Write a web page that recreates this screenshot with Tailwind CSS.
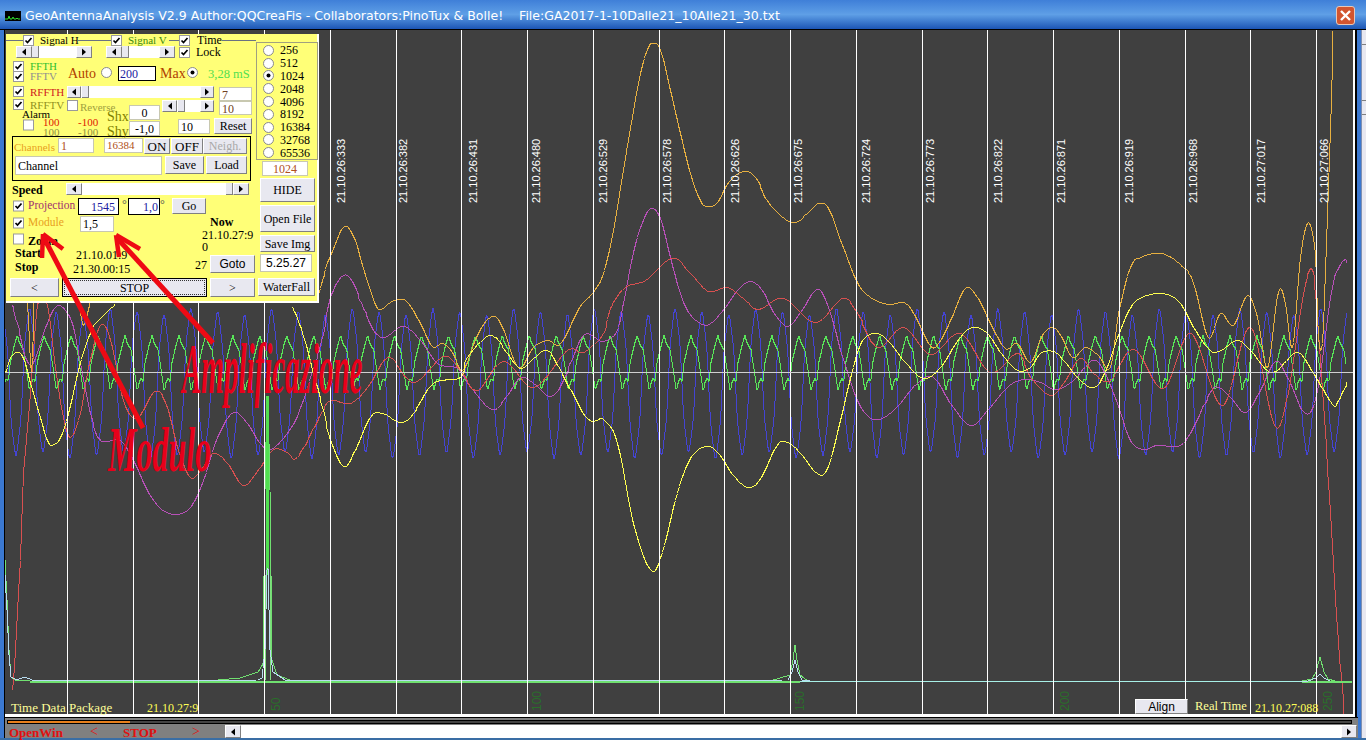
<!DOCTYPE html>
<html lang="en">
<head>
    <meta charset="UTF-8">
    <title>GeoAntennaAnalysis V2.9</title>
    <script src="https://cdn.jsdelivr.net/npm/@tailwindcss/browser@4"></script>
</head>
<body class="w-[1366px] h-[740px] overflow-hidden relative flex flex-col bg-[#3a6ea5] font-['Liberation_Serif',serif] text-[12px] leading-none text-black">

    <svg class="hidden">
        <symbol id="chk" viewBox="0 0 11 11"><rect x="0.5" y="0.5" width="10" height="10" fill="#fff" stroke="#9a9a9a"/><path d="M2.5 5.5l2 2 4-4.5" fill="none" stroke="#000" stroke-width="1.7"/></symbol>
        <symbol id="box" viewBox="0 0 11 11"><rect x="0.5" y="0.5" width="10" height="10" fill="#fff" stroke="#9a9a9a"/></symbol>
        <symbol id="rad" viewBox="0 0 11 11"><circle cx="5.5" cy="5.5" r="5" fill="#fff" stroke="#8a8a8a"/></symbol>
        <symbol id="rdo" viewBox="0 0 11 11"><circle cx="5.5" cy="5.5" r="5" fill="#fff" stroke="#8a8a8a"/><circle cx="5.5" cy="5.5" r="2" fill="#000"/></symbol>
        <symbol id="lft" viewBox="0 0 8 8"><path d="M6 0.5v7L2 4z" fill="#000"/></symbol>
        <symbol id="rgt" viewBox="0 0 8 8"><path d="M2 0.5v7L6 4z" fill="#000"/></symbol>
    </svg>

    <!-- title bar -->
    <div class="h-[30px] shrink-0 flex items-center bg-gradient-to-b from-[#3f7fd8] via-[#5f9fe6] to-[#1c55b4] border-b border-black pl-[5px] pr-[11px]">
        <svg class="w-[16px] h-[10px] mt-[3px]" viewBox="0 0 16 10"><rect width="16" height="10" fill="#000"/><path d="M0 8h3l1-3 1 3h2l1-2 1 2h2l1-1 1 1h2" fill="none" stroke="#30e030"/></svg>
        <span class="ml-[4px] mt-[3px] font-['DejaVu_Sans',sans-serif] text-[12.53px] text-white whitespace-pre">GeoAntennaAnalysis V2.9 Author:QQCreaFis - Collaborators:PinoTux &amp; Bolle!    File:GA2017-1-10Dalle21_10Alle21_30.txt</span>
        <div class="ml-auto mt-[1px] w-[19px] h-[19px] rounded-[3px] border border-[#e8c8b8] bg-[#d2552f] flex items-center justify-center">
            <svg class="w-[11px] h-[11px]" viewBox="0 0 11 11"><path d="M1 1l9 9M10 1l-9 9" stroke="#fff" stroke-width="2.4"/></svg>
        </div>
    </div>

    <div class="h-[708px] shrink-0 flex">
        <div class="w-[5px] shrink-0 bg-[#3b78d0] border-r border-black"></div>

        <!-- plot area -->
        <div class="w-[1350px] shrink-0 flex flex-col">
            <div class="h-[687px] relative bg-[#404040] border-b-[3px] border-r-2 border-white">
                <svg id="plot" class="w-[1348px] h-[684px]" viewBox="5 30 1348 684" shape-rendering="crispEdges" font-family="Liberation Sans">
                    <g id="curves" fill="none" stroke-width="1"></g>
                    <g fill="#ffffff" font-size="11">
                        <text transform="translate(345 203) rotate(-90)">21.10.26:333</text>
                        <text transform="translate(407 203) rotate(-90)">21.10.26:382</text>
                        <text transform="translate(477 203) rotate(-90)">21.10.26:431</text>
                        <text transform="translate(540 203) rotate(-90)">21.10.26:480</text>
                        <text transform="translate(607 203) rotate(-90)">21.10.26:529</text>
                        <text transform="translate(671 203) rotate(-90)">21.10.26:578</text>
                        <text transform="translate(739 203) rotate(-90)">21.10.26:626</text>
                        <text transform="translate(802 203) rotate(-90)">21.10.26:675</text>
                        <text transform="translate(870 203) rotate(-90)">21.10.26:724</text>
                        <text transform="translate(934 203) rotate(-90)">21.10.26:773</text>
                        <text transform="translate(1002 203) rotate(-90)">21.10.26:822</text>
                        <text transform="translate(1065 203) rotate(-90)">21.10.26:871</text>
                        <text transform="translate(1133 203) rotate(-90)">21.10.26:919</text>
                        <text transform="translate(1197 203) rotate(-90)">21.10.26:968</text>
                        <text transform="translate(1265 203) rotate(-90)">21.10.27:017</text>
                        <text transform="translate(1328 203) rotate(-90)">21.10.27:066</text>
                    </g>
                    <g fill="#2a6e2a" font-size="12">
                        <text transform="translate(280 711) rotate(-90)">50</text>
                        <text transform="translate(541 711) rotate(-90)">100</text>
                        <text transform="translate(804 711) rotate(-90)">150</text>
                        <text transform="translate(1069 711) rotate(-90)">200</text>
                        <text transform="translate(1332 711) rotate(-90)">250</text>
                    </g>
                </svg>

                <div class="absolute left-[6px] top-[671px] text-[13px] text-[#ffff99] whitespace-nowrap">Time Data Package</div>
                <div class="absolute left-[142px] top-[672px] text-[#ffff55] whitespace-nowrap">21.10.27:9</div>
                <div class="absolute left-[1130px] top-[669px] w-[53px] h-[15px] flex items-center justify-center bg-[#e8e8f0] border border-t-white border-l-white border-r-[#808080] border-b-[#808080] font-['Liberation_Sans',sans-serif] text-[12px]">Align</div>
                <div class="absolute left-[1190px] top-[670px] text-[12.5px] text-[#ffff99] whitespace-nowrap">Real Time</div>
                <div class="absolute left-[1250px] top-[672px] text-[#ffff55] whitespace-nowrap">21.10.27:088</div>

                <!-- control panel -->
                <div class="absolute left-[1px] top-[4px] w-[313px] h-[269px] flex bg-[#ffff77] border-r-2 border-b-2 border-white">
                    <div class="w-[250px] shrink-0">
                        <!-- signal group -->
                        <div class="h-[12px] flex items-center">
                            <i class="w-[17px] h-px bg-gray-500"></i>
                            <svg class="w-[11px] h-[11px]"><use href="#chk"/></svg>
                            <span class="ml-[6px] w-[38px] whitespace-nowrap text-[11px]">Signal H</span>
                            <i class="w-[33px] h-px bg-gray-500"></i>
                            <svg class="w-[11px] h-[11px]"><use href="#chk"/></svg>
                            <span class="ml-[6px] w-[38px] whitespace-nowrap text-[11px] text-[#3a8a10]">Signal V</span>
                            <i class="ml-[3px] w-[10px] h-px bg-gray-500"></i>
                            <svg class="w-[11px] h-[11px]"><use href="#chk"/></svg>
                            <span class="ml-[7px] w-[25px]">Time</span>
                            <i class="w-[34px] h-px bg-gray-500"></i>
                        </div>
                        <div class="h-[12px] flex items-center">
                            <div class="ml-[10px] w-[76px] h-[12px] flex bg-white">
                                <span class="w-[16px] flex items-center justify-center bg-[#e8e8f0] border border-r-[#808080] border-b-[#808080] border-t-white border-l-white"><svg class="w-[8px] h-[8px]"><use href="#lft"/></svg></span>
                                <span class="w-[7px] bg-[#e8e8f0] border-r border-b border-[#808080]"></span>
                                <span class="flex-1"></span>
                                <span class="w-[16px] flex items-center justify-center bg-[#e8e8f0] border border-r-[#808080] border-b-[#808080] border-t-white border-l-white"><svg class="w-[8px] h-[8px]"><use href="#rgt"/></svg></span>
                            </div>
                            <div class="ml-[14px] w-[69px] h-[12px] flex bg-white">
                                <span class="w-[16px] flex items-center justify-center bg-[#e8e8f0] border border-r-[#808080] border-b-[#808080] border-t-white border-l-white"><svg class="w-[8px] h-[8px]"><use href="#lft"/></svg></span>
                                <span class="w-[7px] bg-[#e8e8f0] border-r border-b border-[#808080]"></span>
                                <span class="flex-1"></span>
                                <span class="w-[16px] flex items-center justify-center bg-[#e8e8f0] border border-r-[#808080] border-b-[#808080] border-t-white border-l-white"><svg class="w-[8px] h-[8px]"><use href="#rgt"/></svg></span>
                            </div>
                            <svg class="ml-[4px] w-[11px] h-[11px]"><use href="#chk"/></svg>
                            <span class="ml-[6px]">Lock</span>
                        </div>
                        <!-- FFT row -->
                        <div class="h-[27px] flex">
                            <div class="ml-[7px] w-[55px] pt-[3px]">
                                <div class="h-[10px] flex items-center"><svg class="w-[11px] h-[11px] shrink-0"><use href="#chk"/></svg><span class="ml-[6px] text-[11px] leading-[10px] text-[#30c030]">FFTH</span></div>
                                <div class="h-[10px] flex items-center"><svg class="w-[11px] h-[11px] shrink-0"><use href="#chk"/></svg><span class="ml-[6px] text-[11px] leading-[10px] text-[#909090]">FFTV</span></div>
                            </div>
                            <span class="w-[33px] mt-[9px] text-[14px] text-[#b04000]">Auto</span>
                            <svg class="mt-[9px] w-[11px] h-[11px]"><use href="#rad"/></svg>
                            <div class="ml-[6px] mt-[8px] w-[38px] h-[15px] flex items-center pl-[1px] bg-white border border-black text-[#2020a0]">200</div>
                            <span class="ml-[4px] w-[27px] mt-[9px] text-[14px] text-[#b04000]">Max</span>
                            <svg class="mt-[9px] w-[11px] h-[11px]"><use href="#rdo"/></svg>
                            <span class="ml-[10px] mt-[10px] whitespace-nowrap text-[12.5px] text-[#50e050]">3,28 mS</span>
                        </div>
                        <!-- RFFT rows -->
                        <div class="h-[14px] flex">
                            <svg class="ml-[7px] mt-[1px] w-[11px] h-[11px]"><use href="#chk"/></svg>
                            <span class="ml-[6px] w-[37px] mt-[2px] text-[11px] text-[#d02020]">RFFTH</span>
                            <div class="mt-[1px] w-[147px] h-[12px] flex bg-white">
                                <span class="w-[14px] flex items-center justify-center bg-[#e8e8f0] border border-r-[#808080] border-b-[#808080] border-t-white border-l-white"><svg class="w-[8px] h-[8px]"><use href="#lft"/></svg></span>
                                <span class="ml-[1px] w-[7px] bg-[#e8e8f0] border-r border-b border-[#808080]"></span>
                                <span class="flex-1"></span>
                                <span class="w-[14px] flex items-center justify-center bg-[#e8e8f0] border border-r-[#808080] border-b-[#808080] border-t-white border-l-white"><svg class="w-[8px] h-[8px]"><use href="#rgt"/></svg></span>
                            </div>
                            <div class="ml-[5px] mt-[2px] w-[33px] h-[14px] pl-[2px] pt-[1px] bg-white border border-[#c8c8b0] text-[#704020]">7</div>
                        </div>
                        <div class="h-[37px] flex">
                            <div class="w-[123px]">
                                <div class="h-[10px] flex">
                                    <svg class="ml-[7px] w-[11px] h-[11px]"><use href="#chk"/></svg>
                                    <span class="ml-[6px] w-[37px] mt-[1px] text-[11px] text-[#909020]">RFFTV</span>
                                    <svg class="mt-[1px] w-[11px] h-[11px] shrink-0"><use href="#box"/></svg>
                                    <span class="ml-[2px] mt-[3px] text-[11px] text-[#a0a040]">Reverse</span>
                                </div>
                                <div class="h-[27px] flex">
                                    <div class="ml-[16px] w-[21px]">
                                        <div class="h-[10px] text-[11px] whitespace-nowrap">Alarm</div>
                                        <svg class="ml-[1px] w-[11px] h-[12px] block"><use href="#box"/></svg>
                                    </div>
                                    <div class="w-[35px] pt-[8px] text-[11px] leading-[10px]">
                                        <div class="h-[10px] text-[#e02000]">100</div>
                                        <div class="h-[10px] text-[#909040]">100</div>
                                    </div>
                                    <div class="w-[29px] pt-[8px] text-[11px] leading-[10px]">
                                        <div class="h-[10px] text-[#e02000]">-100</div>
                                        <div class="h-[10px] text-[#909040]">-100</div>
                                    </div>
                                    <div class="text-[14px] leading-[15px] text-[#808000]">
                                        <div>Shx</div>
                                        <div>Shy</div>
                                    </div>
                                </div>
                            </div>
                            <div class="w-[31px] pt-[6px]">
                                <div class="h-[15px] flex items-center justify-center bg-white border border-[#c8c8b0]">0</div>
                                <div class="mt-[1px] h-[15px] flex items-center justify-center bg-white border border-[#c8c8b0]">-1,0</div>
                            </div>
                            <div class="ml-[2px]">
                                <div class="h-[18px] flex">
                                    <div class="mt-[1px] w-[52px] h-[12px] flex bg-white">
                                        <span class="w-[15px] flex items-center justify-center bg-[#e8e8f0] border border-r-[#808080] border-b-[#808080] border-t-white border-l-white"><svg class="w-[8px] h-[8px]"><use href="#lft"/></svg></span>
                                        <span class="ml-[1px] w-[7px] bg-[#e8e8f0] border-r border-b border-[#808080]"></span>
                                        <span class="flex-1"></span>
                                        <span class="w-[14px] flex items-center justify-center bg-[#e8e8f0] border border-r-[#808080] border-b-[#808080] border-t-white border-l-white"><svg class="w-[8px] h-[8px]"><use href="#rgt"/></svg></span>
                                    </div>
                                    <div class="ml-[5px] mt-[2px] w-[33px] h-[14px] pl-[2px] pt-[1px] bg-white border border-[#c8c8b0] text-[#704020]">10</div>
                                </div>
                                <div class="flex">
                                    <div class="ml-[16px] mt-[2px] w-[32px] h-[15px] flex items-center pl-[2px] bg-white border border-[#c8c8b0]">10</div>
                                    <div class="ml-[4px] mt-[1px] w-[38px] h-[16px] flex items-center justify-center bg-[#e8e8f0] border border-t-white border-l-white border-r-[#808080] border-b-[#808080]">Reset</div>
                                </div>
                            </div>
                        </div>
                        <!-- channels -->
                        <div class="ml-[6px] w-[239px] h-[45px] border border-black">
                            <div class="h-[19px] flex pt-[1px]">
                                <span class="ml-[1px] w-[44px] mt-[4px] text-[11px] text-[#e8a020]">Channels</span>
                                <div class="w-[36px] h-[15px] flex items-center pl-[2px] bg-white border border-[#c8c8b0] text-[#b05020]">1</div>
                                <div class="ml-[10px] w-[39px] h-[15px] flex items-center pl-[2px] bg-white border border-[#c8c8b0] text-[11px] text-[#b05020]">16384</div>
                                <div class="ml-[1px] w-[26px] h-[16px] flex items-center justify-center bg-[#e8e8f0] border border-t-white border-l-white border-r-[#808080] border-b-[#808080] text-[13px]">ON</div>
                                <div class="ml-[1px] w-[32px] h-[16px] flex items-center justify-center bg-[#e8e8f0] border border-t-white border-l-white border-r-[#808080] border-b-[#808080] text-[13px]">OFF</div>
                                <div class="w-[44px] h-[16px] flex items-center justify-center bg-[#e8e8f0] border border-t-white border-l-white border-r-[#808080] border-b-[#808080] text-[#a8a8a8]">Neigh.</div>
                            </div>
                            <div class="flex">
                                <div class="ml-[2px] w-[147px] h-[19px] flex items-center pl-[2px] bg-white border border-[#c8c8b0]">Channel</div>
                                <div class="ml-[3px] w-[39px] h-[18px] flex items-center justify-center bg-[#e8e8f0] border border-t-white border-l-white border-r-[#808080] border-b-[#808080]">Save</div>
                                <div class="ml-[2px] w-[41px] h-[18px] flex items-center justify-center bg-[#e8e8f0] border border-t-white border-l-white border-r-[#808080] border-b-[#808080]">Load</div>
                            </div>
                        </div>
                        <!-- speed -->
                        <div class="h-[16px] flex">
                            <span class="ml-[6px] w-[54px] mt-[3px] font-bold">Speed</span>
                            <div class="mt-[2px] w-[183px] h-[12px] flex bg-white">
                                <span class="w-[16px] flex items-center justify-center bg-[#e8e8f0] border border-r-[#808080] border-b-[#808080] border-t-white border-l-white"><svg class="w-[8px] h-[8px]"><use href="#lft"/></svg></span>
                                <span class="flex-1"></span>
                                <span class="w-[7px] bg-[#e8e8f0] border-r border-b border-[#808080]"></span>
                                <span class="w-[16px] flex items-center justify-center bg-[#e8e8f0] border border-r-[#808080] border-b-[#808080] border-t-white border-l-white"><svg class="w-[8px] h-[8px]"><use href="#rgt"/></svg></span>
                            </div>
                        </div>
                        <!-- projection -->
                        <div class="h-[19px] flex">
                            <svg class="ml-[7px] mt-[3px] w-[11px] h-[12px]"><use href="#chk"/></svg>
                            <span class="ml-[4px] w-[50px] mt-[3px] text-[11.5px] text-[#a03070]">Projection</span>
                            <div class="mt-[1px] w-[41px] h-[17px] flex items-center justify-end pr-[3px] bg-white border border-black text-[#2020a0]">1545</div>
                            <span class="w-[9px] pl-[3px] mt-[1px] text-[#555]">°</span>
                            <div class="mt-[1px] w-[32px] h-[17px] flex items-center justify-end pr-[1px] bg-white border border-black text-[#2020a0]">1,0</div>
                            <span class="w-[12px] mt-[1px] text-[#555]">°</span>
                            <div class="mt-[1px] w-[34px] h-[16px] flex items-center justify-center bg-[#e8e8f0] border border-t-white border-l-white border-r-[#808080] border-b-[#808080]">Go</div>
                        </div>
                        <!-- module / zoom -->
                        <div class="h-[34px] flex">
                            <div class="w-[196px]">
                                <div class="h-[17px] flex">
                                    <svg class="ml-[7px] mt-[1px] w-[11px] h-[12px]"><use href="#chk"/></svg>
                                    <span class="ml-[4px] w-[52px] mt-[1px] text-[11.5px] text-[#e8a020]">Module</span>
                                    <div class="w-[34px] h-[16px] flex items-center pl-[2px] bg-white border border-[#c8c8b0]">1,5</div>
                                </div>
                                <div class="flex">
                                    <svg class="ml-[7px] w-[11px] h-[12px]"><use href="#box"/></svg>
                                    <span class="ml-[4px] mt-[2px] font-bold">Zoom</span>
                                </div>
                            </div>
                            <div>
                                <div class="h-[13px] pl-[8px] font-bold">Now</div>
                                <div class="h-[12px] whitespace-nowrap">21.10.27:9</div>
                                <div class="h-[12px]">0</div>
                            </div>
                        </div>
                        <!-- start / stop -->
                        <div class="h-[28px] flex">
                            <div class="ml-[9px] -mt-[4px] w-[58px] leading-[14px] font-bold">
                                <div>Start</div>
                                <div>Stop</div>
                            </div>
                            <div class="w-[122px] -mt-[2px] leading-[14px] whitespace-nowrap">
                                <div class="pl-[3px]">21.10.01:9</div>
                                <div>21.30.00:15</div>
                            </div>
                            <span class="w-[15px] mt-[9px]">27</span>
                            <div class="mt-[5px] w-[45px] h-[18px] flex items-center justify-center bg-[#e8e8f0] border border-t-white border-l-white border-r-[#808080] border-b-[#808080] font-['Liberation_Sans',sans-serif] text-[12px]">Goto</div>
                        </div>
                        <!-- transport -->
                        <div class="flex">
                            <div class="ml-[4px] w-[49px] h-[19px] flex items-center justify-center bg-[#e8e8f0] border border-t-white border-l-white border-r-[#808080] border-b-[#808080]">&lt;</div>
                            <div class="ml-[3px] w-[145px] h-[19px] flex items-center justify-center bg-[#e8e8f0] border border-black outline outline-1 -outline-offset-3 outline-dotted outline-[#333]">STOP</div>
                            <div class="ml-[3px] w-[45px] h-[19px] flex items-center justify-center bg-[#e8e8f0] border border-t-white border-l-white border-r-[#808080] border-b-[#808080]">&gt;</div>
                        </div>
                    </div>

                    <div class="flex-1">
                        <!-- fft size -->
                        <div class="mt-[8px] w-[62px] h-[118px] pt-[1px] pl-[6px] border border-[#a0a080]">
                            <div class="h-[12.8px] flex items-center"><svg class="w-[11px] h-[11px]"><use href="#rad"/></svg><span class="ml-[6px]">256</span></div>
                            <div class="h-[12.8px] flex items-center"><svg class="w-[11px] h-[11px]"><use href="#rad"/></svg><span class="ml-[6px]">512</span></div>
                            <div class="h-[12.8px] flex items-center"><svg class="w-[11px] h-[11px]"><use href="#rdo"/></svg><span class="ml-[6px]">1024</span></div>
                            <div class="h-[12.8px] flex items-center"><svg class="w-[11px] h-[11px]"><use href="#rad"/></svg><span class="ml-[6px]">2048</span></div>
                            <div class="h-[12.8px] flex items-center"><svg class="w-[11px] h-[11px]"><use href="#rad"/></svg><span class="ml-[6px]">4096</span></div>
                            <div class="h-[12.8px] flex items-center"><svg class="w-[11px] h-[11px]"><use href="#rad"/></svg><span class="ml-[6px]">8192</span></div>
                            <div class="h-[12.8px] flex items-center"><svg class="w-[11px] h-[11px]"><use href="#rad"/></svg><span class="ml-[6px]">16384</span></div>
                            <div class="h-[12.8px] flex items-center"><svg class="w-[11px] h-[11px]"><use href="#rad"/></svg><span class="ml-[6px]">32768</span></div>
                            <div class="h-[12.8px] flex items-center"><svg class="w-[11px] h-[11px]"><use href="#rad"/></svg><span class="ml-[6px]">65536</span></div>
                        </div>
                        <div class="ml-[6px] mt-[1px] w-[46px] h-[15px] flex items-center justify-center bg-white border border-[#c8c8b0] text-[#b05020]">1024</div>
                        <div class="ml-[4px] mt-[2px] w-[55px] h-[24px] flex items-center justify-center bg-[#e8e8f0] border border-t-white border-l-white border-r-[#808080] border-b-[#808080]">HIDE</div>
                        <div class="ml-[4px] mt-[3px] w-[55px] h-[27px] flex items-center justify-center bg-[#e8e8f0] border border-t-white border-l-white border-r-[#808080] border-b-[#808080]">Open File</div>
                        <div class="ml-[4px] mt-[3px] w-[55px] h-[17px] flex items-center justify-center bg-[#e8e8f0] border border-t-white border-l-white border-r-[#808080] border-b-[#808080]">Save Img</div>
                        <div class="ml-[4px] mt-[2px] w-[52px] h-[18px] flex items-center justify-center bg-white border border-[#c8c8b0] font-['Liberation_Sans',sans-serif] text-[12px]">5.25.27</div>
                        <div class="ml-[2px] mt-[6px] w-[57px] h-[18px] flex items-center justify-center bg-[#e8e8f0] border border-t-white border-l-white border-r-[#808080] border-b-[#808080]">WaterFall</div>
                    </div>
                </div>
            </div>

            <!-- bottom strip -->
            <div class="relative h-[21px] -mr-[3px] bg-[#808080] border-t border-black">
                <div class="mt-[2px] ml-[2px] mr-[6px] h-[4px] bg-[#444] border border-black">
                    <div class="w-[122px] h-full bg-[#e8801c]"></div>
                </div>
                <div class="flex h-[13px] mt-[1px]">
                    <span class="ml-[4px] w-[81px] mt-[1px] text-[13px] font-bold text-[#e01010]">OpenWin</span>
                    <span class="w-[33px] text-[14px] text-[#e01010]">&lt;</span>
                    <span class="w-[69px] mt-[1px] text-[13px] font-bold text-[#e01010]">STOP</span>
                    <span class="w-[33px] text-[14px] text-[#e01010]">&gt;</span>
                    <div class="flex-1 mr-[1px] flex bg-white">
                        <span class="w-[16px] flex items-center justify-center bg-[#e8e8f0] border border-r-[#808080] border-b-[#808080] border-t-white border-l-white"><svg class="w-[8px] h-[8px]"><use href="#lft"/></svg></span>
                        <span class="flex-1"></span>
                        <span class="w-[16px] flex items-center justify-center bg-[#e8e8f0] border border-r-[#808080] border-b-[#808080] border-t-white border-l-white"><svg class="w-[8px] h-[8px]"><use href="#rgt"/></svg></span>
                    </div>
                </div>
            </div>
        </div>

        <!-- right edge -->
        <div class="w-[2px] shrink-0 bg-black"></div>
        <div class="w-[4px] shrink-0 bg-[#3b78d0]"></div>
        <div class="flex-1 flex flex-col bg-[#e8e8f0] border-l border-[#8090b0]">
            <div class="h-[15px] border-b border-[#808080]"></div>
            <div class="mt-[55px] h-[15px] border-y border-[#808080]"></div>
        </div>
    </div>
    <div class="h-[2px] shrink-0 bg-[#3a6ea5]"></div>

    <!-- hand drawn notes on top of the screenshot -->
    <svg class="absolute left-0 top-0 w-[1366px] h-[740px] pointer-events-none" viewBox="0 0 1366 740" fill="none" stroke="#ee0a14" stroke-width="5">
        <path d="M143 428L44 238"/>
        <path d="M43 234L63 249M43 234L42 258" stroke-width="4.5"/>
        <path d="M213 343L117 238"/>
        <path d="M116 235L140 249M116 235L119 257" stroke-width="4.5"/>
    </svg>
    <span class="absolute left-[182px] top-[375px] origin-bottom-left scale-y-[2.5] text-[29px] leading-[28px] font-bold italic text-[#e8001a] whitespace-nowrap pointer-events-none">Amplificazione</span>
    <span class="absolute left-[108px] top-[450px] origin-bottom-left scale-y-[1.95] text-[32px] leading-[31px] font-bold italic text-[#e8001a] whitespace-nowrap pointer-events-none">Modulo</span>

    <script>
        var orange = [[27,303],[31,372],[34,303]];
        var orange2 = [[78,303],[83,325],[90,303]];
        var orange3 = [[318,293],[322,280],[330,255],[344,226],[355,240],[362,265],[370,290],[378,309],[390,302],[399,299],[407,302],[420,323],[432,346],[442,343],[452,352],[462,370],[477,335],[490,317],[500,323],[518,367],[533,347],[547,340],[560,343],[580,306],[593,292],[603,273],[613,230],[623,170],[632,117],[640,73],[648,47],[653,43],[660,50],[670,90],[680,133],[690,173],[700,200],[707,206],[717,202],[728,182],[743,171],[755,177],[770,205],[792,222],[807,213],[818,203],[828,208],[840,240],[857,282],[870,297],[888,304],[903,302],[913,313],[930,345],[938,343],[950,320],[965,288],[977,297],[990,323],[1005,348],[1017,343],[1030,362],[1042,335],[1052,327],[1060,335],[1072,357],[1085,347],[1098,355],[1110,367],[1118,313],[1130,267],[1140,257],[1162,253],[1183,267],[1193,283],[1208,337],[1220,313],[1233,325],[1247,295],[1257,317],[1267,367],[1278,292],[1285,303],[1292,347],[1300,257],[1308,222],[1315,253],[1318,337],[1322,343],[1325,270],[1328,187],[1331,100],[1333,31]];
        var yellow = [[5,372],[10,357],[17,352],[23,358],[30,383],[40,417],[48,442],[53,444],[60,437],[68,413],[78,370],[87,340],[95,323],[115,304]];
        var yellow2 = [[292,307],[302,333],[322,407],[330,440],[343,466],[353,453],[370,417],[382,413],[400,422],[413,413],[433,383],[460,377],[467,357],[490,335],[507,353],[520,368],[533,358],[547,350],[560,370],[587,418],[603,419],[617,443],[633,523],[650,569],[660,557],[677,493],[690,458],[705,446],[717,452],[733,475],[748,487],[760,478],[777,445],[787,442],[800,453],[817,473],[827,468],[840,420],[853,367],[862,340],[875,333],[887,340],[903,360],[923,378],[940,367],[960,337],[973,327],[987,333],[1000,352],[1017,370],[1030,367],[1040,353],[1053,351],[1063,360],[1077,377],[1092,387],[1103,375],[1120,330],[1133,303],[1150,294],[1167,294],[1180,303],[1193,327],[1210,350],[1220,350],[1237,340],[1250,350],[1267,370],[1277,370],[1297,352],[1313,373],[1332,404],[1338,400],[1347,382]];
        var magenta = [[12,305],[17,323],[30,365],[47,323],[58,305],[72,323],[82,373],[90,413],[100,440],[120,440],[133,460],[147,490],[160,508],[175,514],[190,507],[203,480],[217,437],[233,412],[247,423],[260,443],[270,449],[287,433],[300,407],[320,345],[330,297],[343,275],[353,283],[363,308],[380,337],[403,326],[420,340],[437,363],[457,368],[470,387],[492,409],[507,395],[520,377],[533,383],[550,396],[563,380],[583,335],[603,341],[617,330],[622,307],[632,257],[640,227],[650,208],[660,218],[670,257],[680,293],[688,312],[700,323],[710,323],[725,307],[737,290],[750,281],[762,290],[773,312],[787,326],[800,312],[817,289],[828,307],[840,350],[857,400],[873,419],[893,410],[917,383],[933,377],[950,403],[970,425],[987,410],[1007,387],[1023,379],[1040,382],[1055,389],[1073,380],[1092,360],[1103,370],[1117,403],[1130,440],[1143,449],[1157,445],[1180,445],[1193,427],[1210,392],[1218,387],[1230,397],[1245,412],[1260,390],[1275,361],[1287,377],[1305,413],[1317,390],[1332,287],[1343,260],[1347,263]];
        var red = [[12,690],[20,560],[23,473],[30,393],[37,305],[47,305],[55,367],[63,417],[70,437],[80,413],[88,367],[100,325],[110,340],[123,400],[136,418],[155,391],[167,407],[177,447],[190,477],[200,470],[213,453],[227,463],[243,485],[260,467],[273,449],[287,452],[297,457],[320,415],[330,400],[350,403],[367,387],[388,357],[413,382],[443,356],[460,370],[477,390],[503,361],[533,387],[567,350],[583,352],[603,333],[610,308],[625,287],[645,280],[672,258],[690,273],[708,291],[727,287],[743,298],[758,309],[783,298],[815,322],[842,298],[857,313],[877,347],[903,327],[930,354],[960,333],[990,372],[1017,353],[1030,377],[1050,395],[1063,383],[1080,358],[1093,373],[1110,380],[1133,349],[1163,388],[1190,333],[1222,405],[1250,327],[1278,427],[1308,272],[1317,320],[1323,403],[1327,470],[1338,640],[1344,714]];

        // catmull-rom, sampled once per pixel
        function smooth(pts) {
            var out = [];
            for (var i = 0; i < pts.length - 1; i++) {
                var p0 = pts[Math.max(i - 1, 0)], p1 = pts[i], p2 = pts[i + 1], p3 = pts[Math.min(i + 2, pts.length - 1)];
                var steps = Math.max(2, Math.ceil(Math.abs(p2[0] - p1[0])));
                for (var s = 0; s < steps; s++) {
                    var t = s / steps, t2 = t * t, t3 = t2 * t;
                    var x = 0.5 * (2 * p1[0] + (p2[0] - p0[0]) * t + (2 * p0[0] - 5 * p1[0] + 4 * p2[0] - p3[0]) * t2 + (3 * p1[0] - p0[0] - 3 * p2[0] + p3[0]) * t3);
                    var y = 0.5 * (2 * p1[1] + (p2[1] - p0[1]) * t + (2 * p0[1] - 5 * p1[1] + 4 * p2[1] - p3[1]) * t2 + (3 * p1[1] - p0[1] - 3 * p2[1] + p3[1]) * t3);
                    out.push((Math.round(x) + 0.5) + "," + (Math.round(y) + 0.5));
                }
            }
            var last = pts[pts.length - 1];
            out.push(last[0] + "," + last[1]);
            return out.join(" ");
        }

        var g = document.getElementById("curves");
        function add(points, color, width, dash) {
            var el = document.createElementNS("http://www.w3.org/2000/svg", "polyline");
            el.setAttribute("points", points);
            el.setAttribute("stroke", color);
            if (width) el.setAttribute("stroke-width", width);
            if (dash) el.setAttribute("stroke-dasharray", dash);
            g.appendChild(el);
        }

        // blue: the mains hum
        var blue = [];
        for (var x = 5; x <= 1347; x++) {
            var th = 2 * Math.PI * (x - 702) / 26.9;
            var y = 383 - 71 * Math.cos(th) + 2.5 * Math.cos(th * 3) - 3 * Math.cos(th * 5) + 3.5 * Math.sin(th / 3);
            blue.push(x + "," + (Math.round(y) + 0.5));
        }
        add(blue.join(" "), "#4444d4");

        // green: one period of its saw shape, repeated
        var shape = [[0,335],[2,342],[4,346],[6,349],[9,368],[12,389],[13,388],[14,382],[16,378],[18,381],[20,362],[24,345],[26.95,335]];
        var green = [];
        for (var x = 5; x <= 1346; x++) {
            var ph = ((x - 718) % 26.95 + 26.95) % 26.95;
            var yg = 335;
            for (var i = 0; i < shape.length - 1; i++) {
                if (ph >= shape[i][0] && ph <= shape[i + 1][0]) {
                    yg = shape[i][1] + (shape[i + 1][1] - shape[i][1]) * (ph - shape[i][0]) / (shape[i + 1][0] - shape[i][0]);
                    break;
                }
            }
            green.push(x + "," + (Math.round(yg) + 0.5));
        }
        add(green.join(" "), "#58e858");

        add(smooth(magenta), "#b850b8");
        add(smooth(red), "#d85050");
        add(smooth(orange), "#e8b040");
        add(smooth(orange2), "#e8b040");
        add(smooth(orange3), "#e8b040");
        add(smooth(yellow), "#ffff50");
        add(smooth(yellow2), "#ffff50");

        // spectrum along the bottom
        add("5,560 7,600 9,650 11,677 17,681 24,680 30,681 207,681 240,678 258,672 263,664 265,490 267,396 268,396 270,490 272,660 277,675 290,680 300,681 770,681 790,675 793,660 795,645 797,660 800,675 808,681 1302,681 1312,679 1316,672 1320,657 1324,672 1328,679 1335,681 1352,681", "#70e070");
        add("30,681.5 800,681.5", "#70e070", "2");
        add("1302,681.5 1352,681.5", "#70e070", "2");
        add("267,396 267,575", "#50e050", "3");
        add("265.5,575 265.5,680", "#80e080");
        add("270.5,575 270.5,680", "#80e080");
        add("5,575 7,610 9,655 11,677 17,680 24,677 27,678 35,681 258,680 262,678 265,650 267,570 268,568 270,650 273,672 285,680 295,681 788,680 792,672 795,660 798,672 802,680 810,681 1308,681 1316,678 1320,674 1324,678 1330,681", "#b8dcf0");
        add("800,681 1302,681", "#a8f0e8");

        // grid goes on top of the traces
        var grid = "";
        for (var k = 0; k < 20; k++) {
            var gx = Math.round(67 + 65.74 * k) + 0.5;
            grid += "M" + gx + " 30V714";
        }
        var gr = document.createElementNS("http://www.w3.org/2000/svg", "path");
        gr.setAttribute("d", grid);
        gr.setAttribute("stroke", "#ffffff");
        g.appendChild(gr);
        add("5,372.5 1353,372.5", "#d0d0d0");
    </script>
</body>
</html>
